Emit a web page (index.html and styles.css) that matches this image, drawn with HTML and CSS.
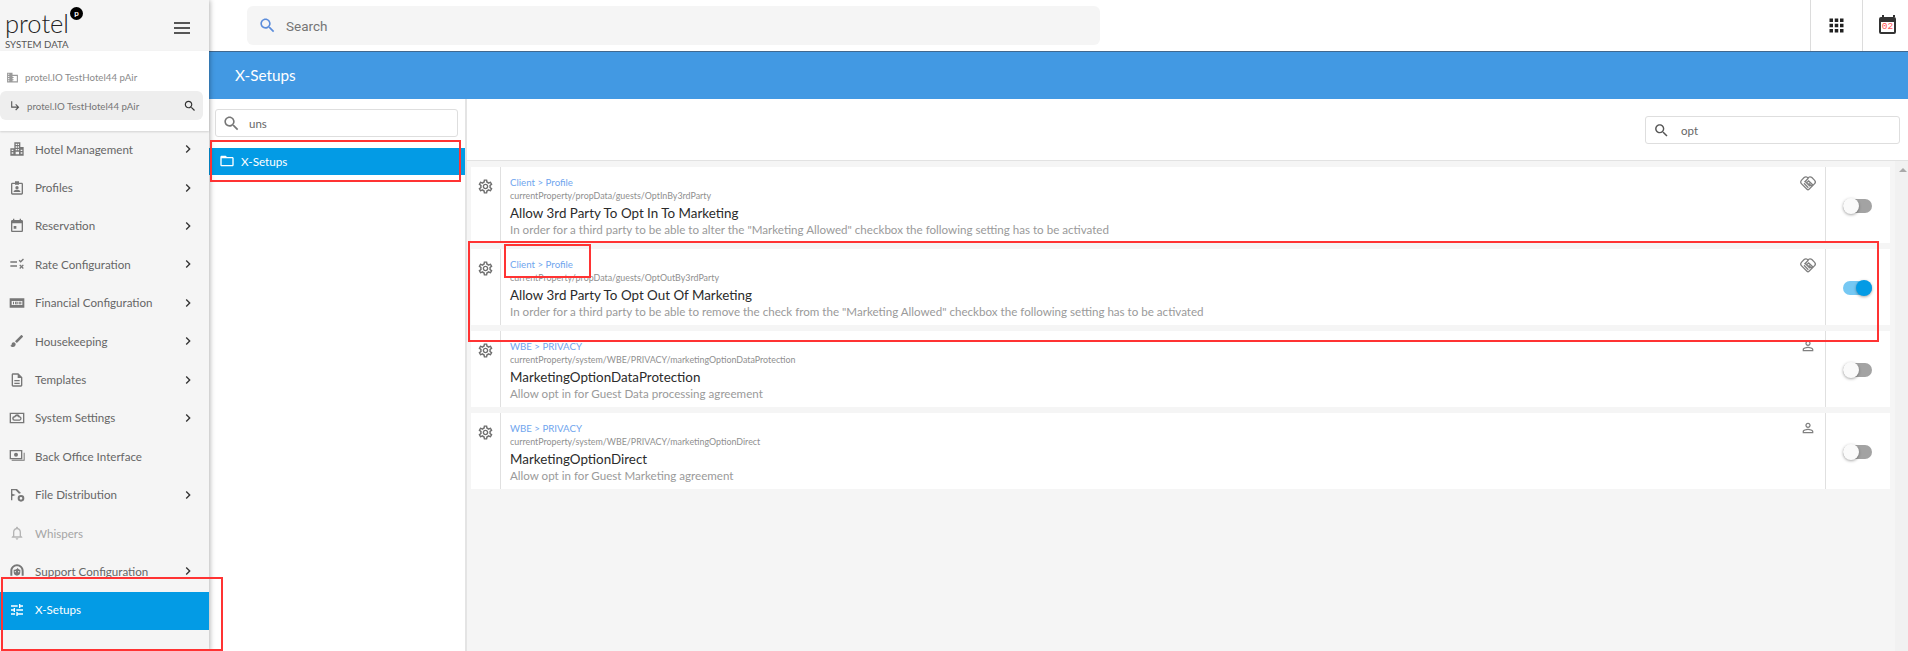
FILE: index.html
```html
<!DOCTYPE html>
<html lang="en">
<head>
    <meta charset="UTF-8">
    <title>X-Setups</title>
    <link rel="stylesheet" href="styles.css">
</head>
<body>
    <svg class="defs" width="0" height="0">
        <symbol id="i-search" viewBox="0 0 24 24"><path d="M15.5 14h-.79l-.28-.27C15.41 12.59 16 11.11 16 9.5 16 5.91 13.09 3 9.5 3S3 5.91 3 9.5 5.91 16 9.5 16c1.61 0 3.09-.59 4.23-1.57l.27.28v.79l5 4.99L20.49 19l-4.99-5zm-6 0C7.01 14 5 11.99 5 9.5S7.01 5 9.5 5 14 7.01 14 9.5 11.99 14 9.5 14z"/></symbol>
        <symbol id="i-chevron" viewBox="0 0 24 24"><path d="M10 6L8.59 7.41 13.17 12l-4.58 4.59L10 18l6-6z"/></symbol>
        <symbol id="i-gear" viewBox="0 0 24 24"><path d="M19.43 12.98c.04-.32.07-.64.07-.98 0-.34-.03-.66-.07-.98l2.11-1.65c.19-.15.24-.42.12-.64l-2-3.46c-.09-.16-.26-.25-.44-.25-.06 0-.12.01-.17.03l-2.49 1c-.52-.4-1.08-.73-1.69-.98l-.38-2.65C14.46 2.18 14.25 2 14 2h-4c-.25 0-.46.18-.49.42l-.38 2.65c-.61.25-1.17.59-1.69.98l-2.49-1c-.06-.02-.12-.03-.18-.03-.17 0-.34.09-.43.25l-2 3.46c-.13.22-.07.49.12.64l2.11 1.65c-.04.32-.07.65-.07.98 0 .33.03.66.07.98l-2.11 1.65c-.19.15-.24.42-.12.64l2 3.46c.09.16.26.25.44.25.06 0 .12-.01.17-.03l2.49-1c.52.4 1.08.73 1.69.98l.38 2.65c.03.24.24.42.49.42h4c.25 0 .46-.18.49-.42l.38-2.65c.61-.25 1.17-.59 1.69-.98l2.49 1c.06.02.12.03.18.03.17 0 .34-.09.43-.25l2-3.46c.12-.22.07-.49-.12-.64l-2.11-1.65zm-1.98-1.71c.04.31.05.52.05.73 0 .21-.02.43-.05.73l-.14 1.13.89.7 1.08.84-.7 1.21-1.27-.51-1.04-.42-.9.68c-.43.32-.84.56-1.25.73l-1.06.43-.16 1.13-.2 1.35h-1.4l-.19-1.35-.16-1.13-1.06-.43c-.43-.18-.83-.41-1.23-.71l-.91-.7-1.06.43-1.27.51-.7-1.21 1.08-.84.89-.7-.14-1.13c-.03-.31-.05-.54-.05-.74s.02-.43.05-.73l.14-1.13-.89-.7-1.08-.84.7-1.21 1.27.51 1.04.42.9-.68c.43-.32.84-.56 1.25-.73l1.06-.43.16-1.13.2-1.35h1.39l.19 1.35.16 1.13 1.06.43c.43.18.83.41 1.23.71l.91.7 1.06-.43 1.27-.51.7 1.21-1.07.85-.89.7.14 1.13zM12 8c-2.21 0-4 1.79-4 4s1.79 4 4 4 4-1.79 4-4-1.79-4-4-4zm0 6c-1.1 0-2-.9-2-2s.9-2 2-2 2 .9 2 2-.9 2-2 2z"/></symbol>
        <symbol id="i-person" viewBox="0 0 24 24"><path d="M12 5.9c1.16 0 2.1.94 2.1 2.1s-.94 2.1-2.1 2.1S9.9 9.16 9.9 8s.94-2.1 2.1-2.1m0 9c2.97 0 6.1 1.46 6.1 2.1v1.1H5.9V17c0-.64 3.13-2.1 6.1-2.1M12 4C9.79 4 8 5.79 8 8s1.79 4 4 4 4-1.79 4-4-1.79-4-4-4zm0 9c-2.67 0-8 1.34-8 4v3h16v-3c0-2.66-5.33-4-8-4z"/></symbol>
        <symbol id="i-deal" viewBox="0 0 24 24"><path d="M12 4.500c1.600-2 4-2.300 5.800-.6l3.800 3.800c1.800 1.800 1.800 3.800 0 5.600L13.500 21.500c-.9.9-2.100.9-3 0L2.400 13.300c-1.800-1.800-1.800-3.800 0-5.600l3.800-3.800C8 2.200 10.400 2.500 12 4.500z" fill="none" stroke="currentColor" stroke-width="2"/><path d="M12.500 5L7.500 10l2.500 1.500 3-2.500 6 5.500-2 2-4-4M6 12.500l6.500 6.500M9 11l6 6" fill="none" stroke="currentColor" stroke-width="2"/></symbol>
    </svg>

    <div class="app">
        <aside class="sidebar">
            <div class="brand">
                <div class="brand-top">
                    <div class="logo">
                        <span class="logo-word">protel</span>
                        <span class="logo-dot">p</span>
                    </div>
                    <svg class="burger" viewBox="0 0 16 12"><path d="M0 1h16M0 6h16M0 11h16"/></svg>
                </div>
                <div class="brand-sub">SYSTEM DATA</div>
            </div>
            <div class="property">
                <div class="prop-row">
                    <svg class="prop-icon" viewBox="0 0 24 24"><path d="M12 7V3H2v18h20V7H12zm-6 12H4v-2h2v2zm0-4H4v-2h2v2zm0-4H4V9h2v2zm0-4H4V5h2v2zm14 12h-8v-2h2v-2h-2v-2h2v-2h-2V9h8v10z"/></svg>
                    <span>protel.IO TestHotel44 pAir</span>
                </div>
                <div class="prop-pill">
                    <svg class="pill-arrow" viewBox="0 0 24 24"><path d="M19 15l-6 6-1.420-1.420L15.170 16H4V4h2v10h9.170l-3.590-3.580L13 9l6 6z"/></svg>
                    <span>protel.IO TestHotel44 pAir</span>
                    <svg class="pill-search"><use href="#i-search"/></svg>
                </div>
            </div>
            <nav class="menu">
                <a class="menu-item">
                    <svg class="menu-icon" viewBox="0 0 24 24"><path fill-rule="evenodd" d="M8 2h9v7h5v13H2V11h6V2zm2 2v2h2V4h-2zm3 0v2h2V4h-2zm-3 4v2h2V8h-2zm3 0v2h2V8h-2zm-3 4v2h2v-2h-2zm3 0v2h2v-2h-2zm-9 1v2h2.500v-2H4zm0 4v2h2.500v-2H4zm13.500-4v2H20v-2h-2.500zm0 4v2H20v-2h-2.500zM10 16v4h5v-4h-5z"/></svg>
                    <span class="menu-label">Hotel Management</span>
                    <svg class="chev"><use href="#i-chevron"/></svg>
                </a>
                <a class="menu-item">
                    <svg class="menu-icon" viewBox="0 0 24 24"><path d="M19 4h-4V2H9v2H5c-1.100 0-2 .9-2 2v14c0 1.100.9 2 2 2h14c1.100 0 2-.9 2-2V6c0-1.100-.9-2-2-2zm0 16H5V6h4v1h6V6h4v14zM12 9a2.500 2.500 0 1 0 0 5 2.500 2.500 0 0 0 0-5zm-5 9h10v-1c0-1.500-3-2.500-5-2.500S7 15.500 7 17v1z"/></svg>
                    <span class="menu-label">Profiles</span>
                    <svg class="chev"><use href="#i-chevron"/></svg>
                </a>
                <a class="menu-item">
                    <svg class="menu-icon" viewBox="0 0 24 24"><path d="M11 12H7v4h4v-4zM16 1v2H8V1H6v2H5c-1.110 0-1.990.9-1.990 2L3 19c0 1.100.89 2 2 2h14c1.100 0 2-.9 2-2V5c0-1.100-.9-2-2-2h-1V1h-2zm3 18H5V8h14v11z"/></svg>
                    <span class="menu-label">Reservation</span>
                    <svg class="chev"><use href="#i-chevron"/></svg>
                </a>
                <a class="menu-item">
                    <svg class="menu-icon" viewBox="0 0 24 24"><path d="M2 8h10v2H2zm0 6h10v2H2zm12.500-7l1.400-1.400 1.600 1.600L21 3.700l1.400 1.400-4.900 4.900zM15.400 14l1.400-1.400 2 2 2-2 1.400 1.400-2 2 2 2-1.400 1.400-2-2-2 2-1.400-1.400 2-2z"/></svg>
                    <span class="menu-label">Rate Configuration</span>
                    <svg class="chev"><use href="#i-chevron"/></svg>
                </a>
                <a class="menu-item">
                    <svg class="menu-icon" viewBox="0 0 24 24"><path fill-rule="evenodd" d="M1 5h22v14H1V5zm3 4v6h16V9H4zm2 1h1.500v4H6zm3 0h4v4H9zm1.300 1.200v1.600h1.400v-1.600zM14.500 10h4v4h-4zm1.300 1.200v1.600h1.400v-1.600z"/></svg>
                    <span class="menu-label">Financial Configuration</span>
                    <svg class="chev"><use href="#i-chevron"/></svg>
                </a>
                <a class="menu-item">
                    <svg class="menu-icon" viewBox="0 0 24 24"><path d="M7 14c-1.660 0-3 1.340-3 3 0 1.310-1.160 2-2 2 .92 1.220 2.490 2 4 2 2.210 0 4-1.790 4-4 0-1.660-1.340-3-3-3zm13.710-9.370l-1.340-1.340c-.39-.39-1.020-.39-1.410 0L9 12.250 11.750 15l8.960-8.960c.39-.39.39-1.020 0-1.410z"/></svg>
                    <span class="menu-label">Housekeeping</span>
                    <svg class="chev"><use href="#i-chevron"/></svg>
                </a>
                <a class="menu-item">
                    <svg class="menu-icon" viewBox="0 0 24 24"><path d="M8 16h8v2H8zm0-4h8v2H8zm6-10H6c-1.100 0-2 .9-2 2v16c0 1.100.89 2 1.990 2H18c1.100 0 2-.9 2-2V8l-6-6zm4 18H6V4h7v5h5v11z"/></svg>
                    <span class="menu-label">Templates</span>
                    <svg class="chev"><use href="#i-chevron"/></svg>
                </a>
                <a class="menu-item">
                    <svg class="menu-icon" viewBox="0 0 24 24"><path fill-rule="evenodd" d="M1 4h22v16H1V4zm2 2v12h18V6H3zm5.500 10a3.500 3.500 0 0 1-.5-7 4.500 4.500 0 0 1 8.300.5 3.300 3.300 0 0 1-.3 6.500H8.500zm0-1.800h7a1.500 1.500 0 0 0 0-3h-1a2.700 2.700 0 0 0-5-.5l-.5.500h-.5a1.500 1.500 0 0 0 0 3z"/></svg>
                    <span class="menu-label">System Settings</span>
                    <svg class="chev"><use href="#i-chevron"/></svg>
                </a>
                <a class="menu-item">
                    <svg class="menu-icon" viewBox="0 0 24 24"><path fill-rule="evenodd" d="M1 3h19v14H1V3zm2 2v10h15V5H3zm7.500 2a3 3 0 1 1 0 6 3 3 0 0 1 0-6zM22 7h1.500v12H4v-1.500h18V7z"/></svg>
                    <span class="menu-label">Back Office Interface</span>
                </a>
                <a class="menu-item">
                    <svg class="menu-icon" viewBox="0 0 24 24"><path fill-rule="evenodd" d="M3 3h9l6 6-3 1-5-5H5v5l5 2-5 2v6H3V3zm15 9a5 5 0 1 1 0 10 5 5 0 0 1 0-10zm0 3a2 2 0 1 0 0 4 2 2 0 0 0 0-4z"/></svg>
                    <span class="menu-label">File Distribution</span>
                    <svg class="chev"><use href="#i-chevron"/></svg>
                </a>
                <a class="menu-item menu-item-muted">
                    <svg class="menu-icon" viewBox="0 0 24 24"><path d="M12 22c1.100 0 2-.9 2-2h-4c0 1.100.9 2 2 2zm6-6v-5c0-3.070-1.630-5.640-4.500-6.320V4c0-.83-.67-1.500-1.500-1.500s-1.500.67-1.500 1.500v.68C7.640 5.360 6 7.920 6 11v5l-2 2v1h16v-1l-2-2zm-2 1H8v-6c0-2.480 1.510-4.500 4-4.500s4 2.020 4 4.500v6z"/></svg>
                    <span class="menu-label">Whispers</span>
                </a>
                <a class="menu-item">
                    <svg class="menu-icon" viewBox="0 0 24 24"><path fill-rule="evenodd" d="M12 2c5.500 0 10 4.500 10 10v7h-3v-7c0-3.900-3.100-7-7-7s-7 3.100-7 7v7H2v-7C2 6.500 6.500 2 12 2zM7 10c3 0 5-1 6-3 1 2 2.500 3 4 3v4c0 3-2.200 5-5 5s-5-2-5-5v-4zm2.500 2a1 1 0 1 0 0 2 1 1 0 0 0 0-2zm5 0a1 1 0 1 0 0 2 1 1 0 0 0 0-2z"/></svg>
                    <span class="menu-label">Support Configuration</span>
                    <svg class="chev"><use href="#i-chevron"/></svg>
                </a>
                <a class="menu-item menu-item-active">
                    <svg class="menu-icon" viewBox="0 0 24 24"><path d="M3 17v2h6v-2H3zM3 5v2h10V5H3zm10 16v-2h8v-2h-8v-2h-2v6h2zM7 9v2H3v2h4v2h2V9H7zm14 4v-2H11v2h10zm-6-4h2V7h4V5h-4V3h-2v6z"/></svg>
                    <span class="menu-label">X-Setups</span>
                </a>
            </nav>
        </aside>

        <div class="main">
            <header class="topbar">
                <div class="global-search">
                    <svg class="global-search-icon"><use href="#i-search"/></svg>
                    <span>Search</span>
                </div>
                <div class="top-btn">
                    <svg class="apps-icon" viewBox="0 0 24 24"><path d="M4 8h4V4H4v4zm6 12h4v-4h-4v4zm-6 0h4v-4H4v4zm0-6h4v-4H4v4zm6 0h4v-4h-4v4zm6-10v4h4V4h-4zm-6 4h4V4h-4v4zm6 6h4v-4h-4v4zm0 6h4v-4h-4v4z"/></svg>
                </div>
                <div class="top-btn top-btn-cal">
                    <div class="calendar"><span>02</span></div>
                </div>
            </header>

            <div class="page-title">X-Setups</div>

            <div class="content">
                <section class="tree">
                    <div class="tree-search">
                        <svg class="tree-search-icon"><use href="#i-search"/></svg>
                        <span>uns</span>
                    </div>
                    <div class="tree-item">
                        <svg class="folder" viewBox="0 0 24 24"><path d="M20 6h-8l-2-2H4c-1.100 0-1.990.9-1.990 2L2 18c0 1.100.9 2 2 2h16c1.100 0 2-.9 2-2V8c0-1.100-.9-2-2-2zm0 12H4V8h16v10z"/></svg>
                        <span>X-Setups</span>
                    </div>
                </section>

                <section class="settings">
                    <div class="toolbar">
                        <div class="filter">
                            <svg class="filter-icon"><use href="#i-search"/></svg>
                            <span>opt</span>
                        </div>
                    </div>
                    <div class="list-wrap">
                        <div class="list">
                            <article class="card">
                                <div class="card-gear"><svg><use href="#i-gear"/></svg></div>
                                <div class="card-body">
                                    <div class="crumb">Client &gt; Profile</div>
                                    <div class="path">currentProperty/propData/guests/OptInBy3rdParty</div>
                                    <div class="title">Allow 3rd Party To Opt In To Marketing</div>
                                    <div class="desc">In order for a third party to be able to alter the "Marketing Allowed" checkbox the following setting has to be activated</div>
                                    <svg class="badge badge-deal"><use href="#i-deal"/></svg>
                                </div>
                                <div class="card-switch"><span class="switch"></span></div>
                            </article>
                            <article class="card">
                                <div class="card-gear"><svg><use href="#i-gear"/></svg></div>
                                <div class="card-body">
                                    <div class="crumb">Client &gt; Profile</div>
                                    <div class="path">currentProperty/propData/guests/OptOutBy3rdParty</div>
                                    <div class="title">Allow 3rd Party To Opt Out Of Marketing</div>
                                    <div class="desc">In order for a third party to be able to remove the check from the "Marketing Allowed" checkbox the following setting has to be activated</div>
                                    <svg class="badge badge-deal"><use href="#i-deal"/></svg>
                                </div>
                                <div class="card-switch"><span class="switch switch-on"></span></div>
                            </article>
                            <article class="card">
                                <div class="card-gear"><svg><use href="#i-gear"/></svg></div>
                                <div class="card-body">
                                    <div class="crumb">WBE &gt; PRIVACY</div>
                                    <div class="path">currentProperty/system/WBE/PRIVACY/marketingOptionDataProtection</div>
                                    <div class="title">MarketingOptionDataProtection</div>
                                    <div class="desc">Allow opt in for Guest Data processing agreement</div>
                                    <svg class="badge"><use href="#i-person"/></svg>
                                </div>
                                <div class="card-switch"><span class="switch"></span></div>
                            </article>
                            <article class="card">
                                <div class="card-gear"><svg><use href="#i-gear"/></svg></div>
                                <div class="card-body">
                                    <div class="crumb">WBE &gt; PRIVACY</div>
                                    <div class="path">currentProperty/system/WBE/PRIVACY/marketingOptionDirect</div>
                                    <div class="title">MarketingOptionDirect</div>
                                    <div class="desc">Allow opt in for Guest Marketing agreement</div>
                                    <svg class="badge"><use href="#i-person"/></svg>
                                </div>
                                <div class="card-switch"><span class="switch"></span></div>
                            </article>
                        </div>
                        <div class="scrollbar"><span class="scroll-up"></span></div>
                    </div>
                </section>
            </div>
        </div>
    </div>

    <!-- red annotation boxes drawn on top of the screenshot -->
    <div class="mark mark-tree"></div>
    <div class="mark mark-side"></div>
    <div class="mark mark-card"></div>
    <div class="mark mark-crumb"></div>
</body>
</html>
```

FILE: styles.css
```css
* {
    box-sizing: border-box;
}

html, body {
    margin: 0;
    height: 100%;
    overflow: hidden;
}

body {
    font-family: Lato, "Open Sans", Arial, sans-serif;
    color: #333;
    background-color: #fff;
    position: relative;
}

svg {
    display: block;
    fill: currentColor;
}

.defs {
    position: absolute;
}

.app {
    display: flex;
    height: 651px;
}

/* sidebar */
.sidebar {
    width: 209px;
    flex-shrink: 0;
    background-color: #f5f5f5;
    box-shadow: 1px 0 5px rgba(0, 0, 0, 0.3);
    position: relative;
    z-index: 2;
}

.brand {
    height: 51px;
    padding: 0 0 0 5px;
}

.brand-top {
    display: flex;
    align-items: flex-start;
    height: 38px;
}

.logo {
    display: flex;
    align-items: flex-start;
    width: 169px;
    padding-top: 9px;
}

.logo-word {
    font-size: 25.5px;
    font-weight: 300;
    line-height: 29px;
    color: #222;
}

.logo-dot {
    width: 13px;
    height: 13px;
    margin: -2px 0 0 1px;
    border-radius: 50%;
    background-color: #000;
    color: #fff;
    font-size: 8px;
    font-weight: 700;
    line-height: 12px;
    text-align: center;
}

.burger {
    width: 16px;
    height: 12px;
    margin-top: 22px;
    fill: none;
    stroke: #222;
    stroke-width: 1.4;
}

.brand-sub {
    font-size: 9.7px;
    line-height: 12px;
    color: #555;
}

.property {
    height: 80px;
    padding-top: 16px;
    background-color: #fff;
    box-shadow: 0 1px 2px rgba(0, 0, 0, 0.15);
    font-size: 9.7px;
    color: #8a8a8a;
}

.prop-row {
    display: flex;
    align-items: center;
    height: 20px;
    padding-left: 6px;
}

.prop-icon {
    width: 13px;
    height: 13px;
    margin-right: 6px;
    color: #9a9a9a;
}

.prop-pill {
    display: flex;
    align-items: center;
    width: 203px;
    height: 29px;
    margin-top: 4px;
    padding: 0 6px 0 9px;
    border-radius: 6px;
    background-color: #eee;
    color: #757575;
}

.pill-arrow {
    width: 13px;
    height: 13px;
    margin-right: 5px;
    color: #555;
}

.pill-search {
    width: 14px;
    height: 14px;
    margin-left: auto;
    color: #333;
}

.menu-item {
    display: flex;
    align-items: center;
    height: 38.4px;
    padding: 0 0 2px 9px;
    font-size: 11.6px;
    color: #666;
}

.menu-icon {
    width: 16px;
    height: 16px;
    margin-right: 10px;
    color: #777;
}

.chev {
    width: 16px;
    height: 16px;
    margin-left: auto;
    margin-right: 13px;
    color: #333;
}

.menu-item-muted {
    color: #a5a5a5;
}

.menu-item-muted .menu-icon {
    color: #b5b5b5;
}

.menu-item-active {
    background-color: #039be5;
    color: #fff;
}

.menu-item-active .menu-icon {
    color: #fff;
}

/* main column */
.main {
    flex: 1;
    min-width: 0;
    display: flex;
    flex-direction: column;
}

.topbar {
    display: flex;
    height: 51px;
    flex-shrink: 0;
    padding-left: 38px;
}

.global-search {
    display: flex;
    align-items: center;
    width: 853px;
    height: 39px;
    margin-top: 6px;
    margin-right: auto;
    padding-left: 11px;
    border-radius: 6px;
    background-color: #f5f5f5;
    font-family: Roboto, Arial, sans-serif;
    font-size: 13.5px;
    color: #757575;
}

.global-search-icon {
    width: 19px;
    height: 19px;
    margin-right: 9px;
    color: #5c8ddb;
}

.top-btn {
    display: flex;
    align-items: center;
    justify-content: center;
    width: 52px;
    border-left: 1px solid #dcdcdc;
}

.top-btn-cal {
    width: 46px;
    padding-left: 4px;
}

.apps-icon {
    width: 21px;
    height: 21px;
    color: #222;
}

.calendar {
    width: 17px;
    height: 17px;
    border: 2px solid #333;
    border-top-width: 5px;
    border-radius: 2px;
    position: relative;
    font-family: "Liberation Mono", monospace;
    font-size: 9.5px;
    line-height: 10px;
    text-align: center;
    color: #f55;
}

.calendar::before {
    content: "";
    position: absolute;
    top: -7px;
    left: 1px;
    width: 9px;
    height: 2px;
    border-left: 2px solid #333;
    border-right: 2px solid #333;
}

.page-title {
    height: 48px;
    flex-shrink: 0;
    padding-left: 26px;
    border-top: 1px solid #40688f;
    background-color: #4299e3;
    color: #fff;
    font-size: 15.3px;
    line-height: 46px;
}

.content {
    flex: 1;
    min-height: 0;
    display: flex;
}

/* tree pane */
.tree {
    width: 258px;
    flex-shrink: 0;
    border-right: 2px solid #e4e4e4;
}

.tree-search {
    display: flex;
    align-items: center;
    height: 28px;
    margin: 10px 7px 11px 6px;
    padding-left: 6px;
    border: 1px solid #dedede;
    border-radius: 3px;
    font-size: 11.5px;
    color: #666;
}

.tree-search-icon {
    width: 19px;
    height: 19px;
    margin-right: 8px;
    color: #777;
}

.tree-item {
    display: flex;
    align-items: center;
    height: 27px;
    padding: 0 0 1px 10px;
    background-color: #039be5;
    color: #fff;
    font-size: 11.7px;
}

.folder {
    width: 16px;
    height: 16px;
    margin-right: 6px;
}

/* settings pane */
.settings {
    flex: 1;
    min-width: 0;
    display: flex;
    flex-direction: column;
}

.toolbar {
    display: flex;
    justify-content: flex-end;
    height: 62px;
    flex-shrink: 0;
    padding: 17px 8px 0 0;
    border-bottom: 1px solid #e2e2e2;
}

.filter {
    display: flex;
    align-items: center;
    width: 255px;
    height: 28px;
    padding-left: 7px;
    border: 1px solid #dedede;
    border-radius: 3px;
    font-size: 11.5px;
    color: #666;
}

.filter-icon {
    width: 17px;
    height: 17px;
    margin-right: 11px;
    color: #555;
}

.list-wrap {
    flex: 1;
    min-height: 0;
    display: flex;
    background-color: #f5f5f5;
}

.list {
    flex: 1;
    min-width: 0;
    display: flex;
    flex-direction: column;
    gap: 6px;
    padding: 6px 5px 0 4px;
}

.scrollbar {
    width: 13px;
    flex-shrink: 0;
    padding: 7px 0 0 4px;
    background-color: #f1f1f1;
}

.scroll-up {
    display: block;
    width: 0;
    height: 0;
    border-left: 4px solid transparent;
    border-right: 4px solid transparent;
    border-bottom: 4px solid #a9a9a9;
}

.card {
    display: flex;
    height: 76px;
    background-color: #fff;
}

.card-gear {
    width: 30px;
    flex-shrink: 0;
    padding: 11px 0 0 6px;
    border-right: 1px solid #e0e0e0;
}

.card-gear svg {
    width: 17px;
    height: 17px;
    color: #6f6f6f;
}

.card-body {
    flex: 1;
    min-width: 0;
    position: relative;
    padding: 9px 0 0 9px;
}

.crumb {
    font-size: 9.7px;
    line-height: 13px;
    color: #6fa5ee;
}

.path {
    font-size: 8.9px;
    line-height: 13px;
    color: #8f8f8f;
}

.title {
    font-size: 13.4px;
    line-height: 18px;
    margin-top: 2px;
    color: #2b2b2b;
}

.desc {
    font-size: 11.6px;
    line-height: 15px;
    color: #9a9a9a;
}

.badge {
    position: absolute;
    top: 7px;
    right: 9px;
    width: 16px;
    height: 16px;
    color: #808080;
}

.badge-deal {
    top: 8px;
}

.card-switch {
    display: flex;
    align-items: center;
    justify-content: center;
    width: 65px;
    flex-shrink: 0;
    padding: 2px 2px 0 0;
    border-left: 1px solid #e0e0e0;
}

.switch {
    display: block;
    width: 29px;
    height: 14px;
    border-radius: 7px;
    background-color: #a3a3a3;
    position: relative;
}

.switch::after {
    content: "";
    position: absolute;
    top: -1px;
    left: 0;
    width: 16px;
    height: 16px;
    border-radius: 50%;
    background-color: #fafafa;
    box-shadow: 0 1px 3px rgba(0, 0, 0, 0.35);
}

.switch-on {
    background-color: #76c8f3;
}

.switch-on::after {
    left: 13px;
    background-color: #039be5;
}

/* annotations */
.mark {
    position: absolute;
    z-index: 5;
    border: 2px solid #f33;
}

.mark-tree {
    left: 210px;
    top: 140px;
    width: 251px;
    height: 42px;
}

.mark-side {
    left: 1px;
    top: 577px;
    width: 222px;
    height: 74px;
}

.mark-card {
    left: 468px;
    top: 241px;
    width: 1411px;
    height: 101px;
}

.mark-crumb {
    left: 504px;
    top: 244px;
    width: 87px;
    height: 34px;
}
```
